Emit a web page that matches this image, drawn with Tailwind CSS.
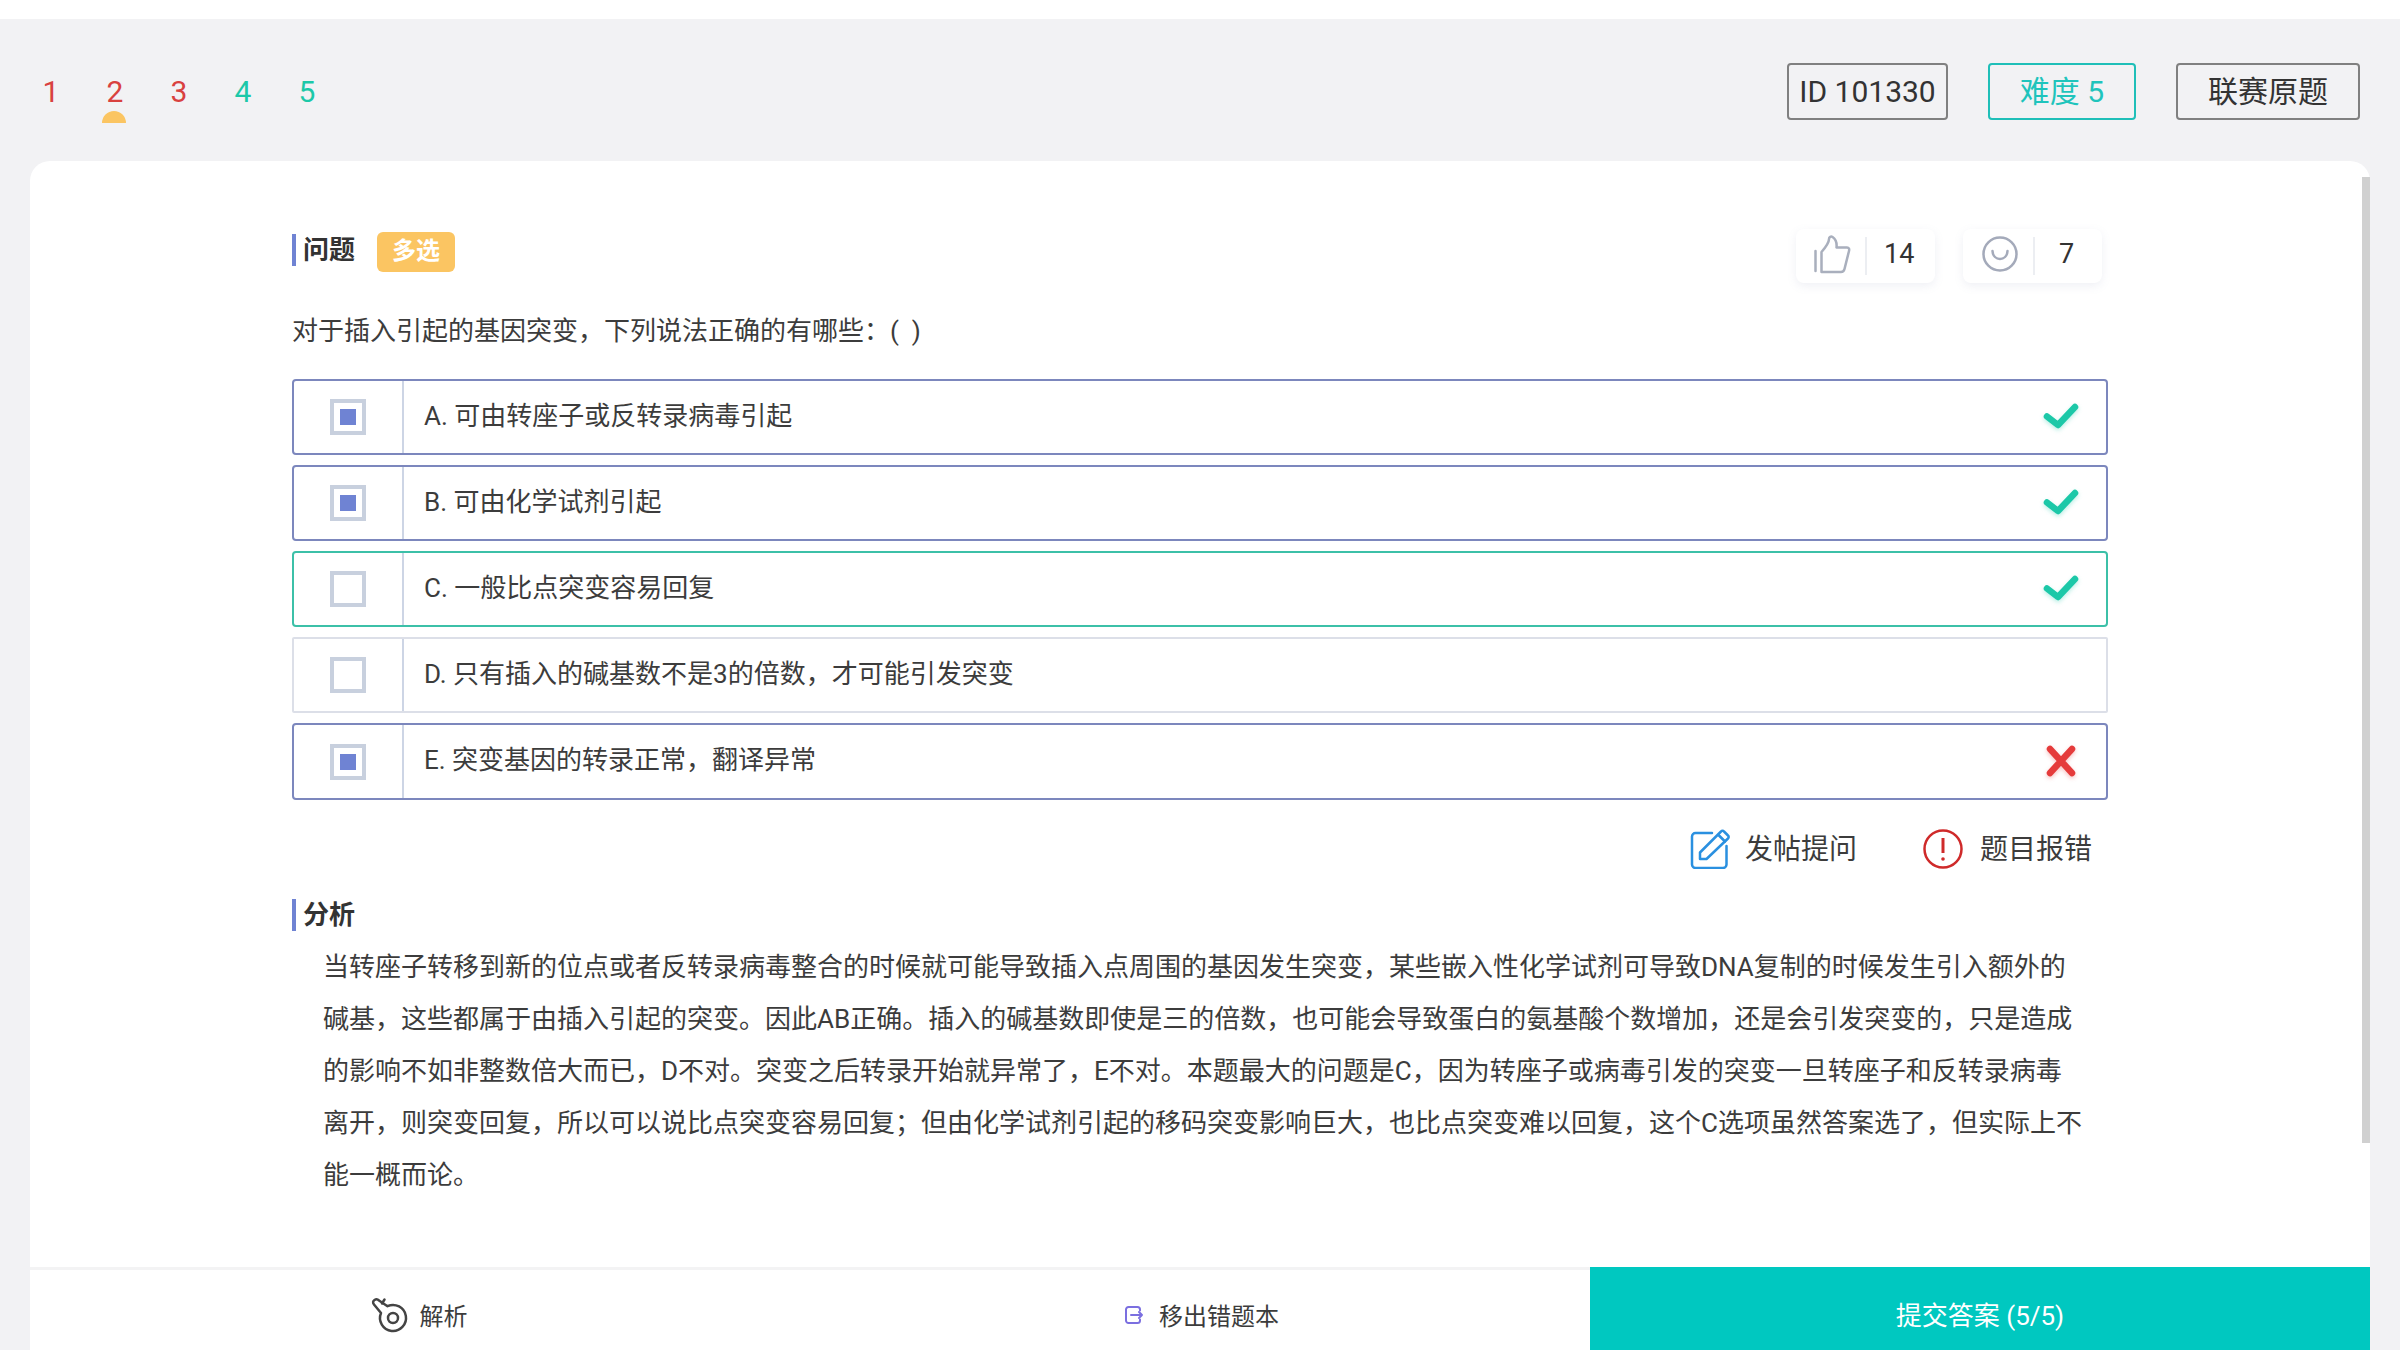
<!DOCTYPE html>
<html lang="zh">
<head>
<meta charset="utf-8">
<script src="https://cdn.jsdelivr.net/npm/@tailwindcss/browser@4"></script>
</head>
<body class="bg-white">
<div class="w-[2400px] h-[1350px] overflow-hidden bg-[#f2f2f4] flex flex-col text-[#3c3c3c] [font-family:Roboto,'Noto_Sans_CJK_SC',sans-serif]">
  <div class="h-[19px] bg-white shrink-0"></div>
  <header class="h-[142px] shrink-0 flex items-start pl-[37px] pr-[40px] pt-[44px]">
    <nav class="flex text-[30px] leading-[58px] h-[58px]">
      <span class="w-[28px] mr-[36px] text-center text-[#d9413f]">1</span>
      <span class="relative w-[28px] mr-[36px] text-center text-[#d9413f]">2<i class="absolute left-[1px] top-[48px] w-[24px] h-[12px] rounded-t-full bg-[#fbc562]"></i></span>
      <span class="w-[28px] mr-[36px] text-center text-[#d9413f]">3</span>
      <span class="w-[28px] mr-[36px] text-center text-[#1cc8a8]">4</span>
      <span class="w-[28px] text-center text-[#1cc8a8]">5</span>
    </nav>
    <div class="ml-auto flex gap-[40px] text-[30px] leading-[53px]">
      <span class="w-[161px] h-[57px] border-2 border-[#808080] rounded-[4px] text-center text-[#333]">ID 101330</span>
      <span class="w-[148px] h-[57px] border-2 border-[#1fbfb8] rounded-[4px] text-center text-[#1fc4bc]">难度 5</span>
      <span class="w-[184px] h-[57px] border-2 border-[#808080] rounded-[4px] text-center text-[#333]">联赛原题</span>
    </div>
  </header>

  <main class="relative mx-[30px] flex-1 bg-white rounded-t-[20px] flex flex-col">
    <div class="absolute right-0 top-[16px] w-[8px] h-[966px] bg-[#d0d0d0]"></div>
    <div class="flex-1 px-[262px] pt-[68px]">
      <div class="flex justify-between h-[54px]">
        <div class="flex items-start pt-[3px]">
          <h2 class="border-l-4 border-[#6f83d3] h-[32px] mt-[2px] pl-[7px] text-[26px] leading-[32px] font-bold text-[#333]">问题</h2>
          <span class="ml-[22px] w-[78px] h-[40px] rounded-[6px] bg-[#fbc562] text-white text-[24px] leading-[38px] font-semibold text-center">多选</span>
        </div>
        <div class="flex gap-[28px] mr-[6px]">
          <div class="relative w-[139px] h-[54px] rounded-[8px] bg-white shadow-[0_3px_10px_rgba(120,130,170,0.12)] flex items-center">
            <svg class="absolute left-[18px] top-[6px]" width="37" height="39" viewBox="0 0 37 39" fill="none" stroke="#a9afbd" stroke-width="2.5" stroke-linejoin="round" stroke-linecap="round"><path d="M7.5 37V17C11 13 15 8 15 4C15 2 17 1 18.5 2C21.5 4 23 8 22.5 12.5H33C35 12.5 35.5 14 35 16L30.5 34C30 36 29 37 27 37Z"/><path d="M1.5 16V36"/></svg>
            <span class="absolute left-[69px] top-[8px] w-[2px] h-[38px] bg-[#eceef2]"></span>
            <span class="absolute left-[88px] top-[6px] text-[27px] leading-[38px] text-[#333]">14</span>
          </div>
          <div class="relative w-[139px] h-[54px] rounded-[8px] bg-white shadow-[0_3px_10px_rgba(120,130,170,0.12)] flex items-center">
            <svg class="absolute left-[19px] top-[7px]" width="36" height="36" viewBox="0 0 36 36" fill="none" stroke="#a4aaba" stroke-width="2.5" stroke-linecap="round"><circle cx="18" cy="18" r="16.5"/><path d="M10.5 15C11 25.5 25 25.5 25.5 15"/></svg>
            <span class="absolute left-[70px] top-[8px] w-[2px] h-[38px] bg-[#eceef2]"></span>
            <span class="absolute left-[96px] top-[6px] text-[27px] leading-[38px] text-[#333]">7</span>
          </div>
        </div>
      </div>

      <p class="mt-[28px] text-[26px] leading-[40px]">对于插入引起的基因突变，下列说法正确的有哪些：(&nbsp;&nbsp;)</p>

      <ul class="mt-[28px] flex flex-col gap-[10px] text-[26px]">
        <li class="h-[76px] flex items-center border-2 border-[#7c87bd] rounded-[4px]">
          <div class="w-[110px] h-full border-r-2 border-[#cdd5e5] flex items-center justify-center pr-[1px]"><span class="w-[36px] h-[36px] border-4 border-[#c8d0de] flex items-center justify-center"><i class="w-[16px] h-[16px] bg-[#6f83d3]"></i></span></div>
          <span class="ml-[20px] leading-[36px] -mt-[3px]">A. 可由转座子或反转录病毒引起</span>
          <svg class="ml-auto mr-[27px] -mt-[2px] drop-shadow-[0_2px_2px_rgba(28,200,168,0.3)]" width="36" height="26" viewBox="0 0 36 26" fill="none" stroke="#1cc8a8" stroke-width="6.5" stroke-linecap="round" stroke-linejoin="round"><path d="M4 13.5L15 22L32 4"/></svg>
        </li>
        <li class="h-[76px] flex items-center border-2 border-[#7c87bd] rounded-[4px]">
          <div class="w-[110px] h-full border-r-2 border-[#cdd5e5] flex items-center justify-center pr-[1px]"><span class="w-[36px] h-[36px] border-4 border-[#c8d0de] flex items-center justify-center"><i class="w-[16px] h-[16px] bg-[#6f83d3]"></i></span></div>
          <span class="ml-[20px] leading-[36px] -mt-[3px]">B. 可由化学试剂引起</span>
          <svg class="ml-auto mr-[27px] -mt-[2px] drop-shadow-[0_2px_2px_rgba(28,200,168,0.3)]" width="36" height="26" viewBox="0 0 36 26" fill="none" stroke="#1cc8a8" stroke-width="6.5" stroke-linecap="round" stroke-linejoin="round"><path d="M4 13.5L15 22L32 4"/></svg>
        </li>
        <li class="h-[76px] flex items-center border-2 border-[#3cc0a8] rounded-[4px]">
          <div class="w-[110px] h-full border-r-2 border-[#cdd5e5] flex items-center justify-center pr-[1px]"><span class="w-[36px] h-[36px] border-4 border-[#c8d0de]"></span></div>
          <span class="ml-[20px] leading-[36px] -mt-[3px]">C. 一般比点突变容易回复</span>
          <svg class="ml-auto mr-[27px] -mt-[2px] drop-shadow-[0_2px_2px_rgba(28,200,168,0.3)]" width="36" height="26" viewBox="0 0 36 26" fill="none" stroke="#1cc8a8" stroke-width="6.5" stroke-linecap="round" stroke-linejoin="round"><path d="M4 13.5L15 22L32 4"/></svg>
        </li>
        <li class="h-[76px] flex items-center border-2 border-[#dcdfe8] rounded-[2px]">
          <div class="w-[110px] h-full border-r-2 border-[#cdd5e5] flex items-center justify-center pr-[1px]"><span class="w-[36px] h-[36px] border-4 border-[#c8d0de]"></span></div>
          <span class="ml-[20px] leading-[36px] -mt-[3px]">D. 只有插入的碱基数不是3的倍数，才可能引发突变</span>
        </li>
        <li class="h-[77px] flex items-center border-2 border-[#7c87bd] rounded-[4px]">
          <div class="w-[110px] h-full border-r-2 border-[#cdd5e5] flex items-center justify-center pr-[1px]"><span class="w-[36px] h-[36px] border-4 border-[#c8d0de] flex items-center justify-center"><i class="w-[16px] h-[16px] bg-[#6f83d3]"></i></span></div>
          <span class="ml-[20px] leading-[36px] -mt-[3px]">E. 突变基因的转录正常，翻译异常</span>
          <svg class="ml-auto mr-[29px] -mt-[2px] drop-shadow-[0_2px_2px_rgba(229,59,59,0.3)]" width="32" height="32" viewBox="0 0 32 32" fill="none" stroke="#e53b3b" stroke-width="6.5" stroke-linecap="round"><path d="M5 4L27 28M27 4L5 28"/></svg>
        </li>
      </ul>

      <div class="mt-[29px] h-[40px] flex justify-end items-center pr-[16px] text-[28px] leading-[43px]">
        <svg class="mr-[15px]" width="40" height="40" viewBox="0 0 40 40" fill="none" stroke="#2a90e0" stroke-width="2.5" stroke-linecap="round" stroke-linejoin="round"><path d="M22 4H5.5A3.5 3.5 0 0 0 2 7.5V35.5A3.5 3.5 0 0 0 5.5 39H33A3.5 3.5 0 0 0 36.5 35.5V17"/><path d="M10 30V23.5L31 2.5A2 2 0 0 1 34 2.5L38 6.5A2 2 0 0 1 38 9.5L16.5 30Z"/><path d="M28.5 6L35 12.5"/></svg>
        <span>发帖提问</span>
        <svg class="ml-[66px] mr-[17px]" width="40" height="40" viewBox="0 0 40 40" fill="none" stroke="#cf2a2a" stroke-width="2.5"><circle cx="20" cy="20" r="18.5"/><path d="M20 9V24" stroke-width="3"/><circle cx="20" cy="30" r="1.8" fill="#cf2a2a" stroke="none"/></svg>
        <span>题目报错</span>
      </div>

      <h2 class="mt-[30px] border-l-4 border-[#6f83d3] h-[32px] pl-[7px] text-[26px] leading-[32px] font-bold text-[#333]">分析</h2>
      <p class="mt-[10px] ml-[31px] text-[26px] leading-[52px] whitespace-nowrap">
        <span class="block">当转座子转移到新的位点或者反转录病毒整合的时候就可能导致插入点周围的基因发生突变，某些嵌入性化学试剂可导致DNA复制的时候发生引入额外的</span>
        <span class="block">碱基，这些都属于由插入引起的突变。因此AB正确。插入的碱基数即使是三的倍数，也可能会导致蛋白的氨基酸个数增加，还是会引发突变的，只是造成</span>
        <span class="block">的影响不如非整数倍大而已，D不对。突变之后转录开始就异常了，E不对。本题最大的问题是C，因为转座子或病毒引发的突变一旦转座子和反转录病毒</span>
        <span class="block">离开，则突变回复，所以可以说比点突变容易回复；但由化学试剂引起的移码突变影响巨大，也比点突变难以回复，这个C选项虽然答案选了，但实际上不</span>
        <span class="block">能一概而论。</span>
      </p>
    </div>

    <footer class="h-[83px] shrink-0 flex border-t-[3px] border-[#f3f3f4]">
      <div class="w-[780px] flex items-center justify-center gap-[10px] text-[24px] pr-[3px] pt-[13px]">
        <svg class="-mt-[5px]" width="40" height="40" viewBox="0 0 40 40" fill="none" stroke="#444" stroke-width="2.5" stroke-linecap="round" stroke-linejoin="round"><path d="M17.5 12.2A13 13 0 1 1 11 19L4 10.5C2.5 9 3 7 4.5 6C6 5 7.5 5 9 6.5Z"/><circle cx="23" cy="24" r="5"/><path d="M14.5 5.5L12 9.5"/></svg>
        <span>解析</span>
      </div>
      <div class="w-[780px] flex items-center justify-center gap-[15px] text-[24px] pt-[13px] pl-[4px]">
        <svg class="-mt-[3px]" width="19" height="18" viewBox="0 0 19 18" fill="none" stroke="#7b6fe0" stroke-width="2" stroke-linecap="round" stroke-linejoin="round"><path d="M15 4.5V3.5A2.5 2.5 0 0 0 12.5 1H3.5A2.5 2.5 0 0 0 1 3.5V14.5A2.5 2.5 0 0 0 3.5 17H12.5A2.5 2.5 0 0 0 15 14.5V13.5"/><path d="M6 9H17M14 6L17 9L14 12"/></svg>
        <span>移出错题本</span>
      </div>
      <button class="w-[780px] -mt-[3px] pt-[15px] bg-[#00c8c0] text-white text-[26px]">提交答案 (5/5)</button>
    </footer>
  </main>
</div>
</body>
</html>
